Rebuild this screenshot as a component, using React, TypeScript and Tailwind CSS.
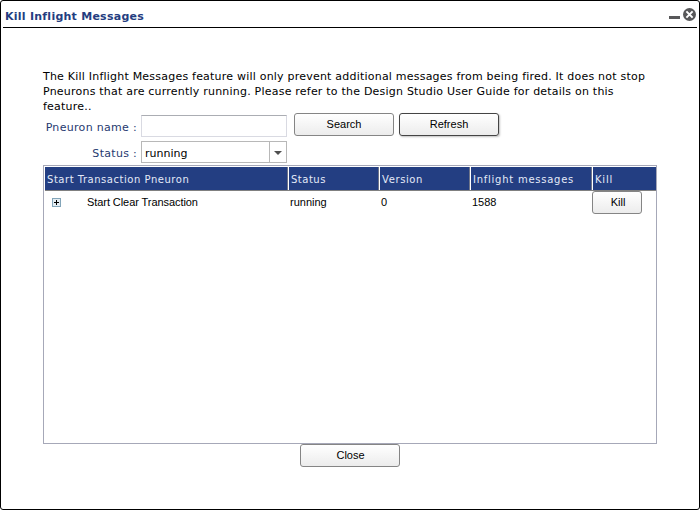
import type { ReactNode } from "react";

const verdana = "font-['DejaVu_Sans',Verdana,sans-serif]";
const arial = "font-['Liberation_Sans',Arial,sans-serif]";

function Button({ children, className = "" }: { children: ReactNode; className?: string }) {
  return (
    <button
      className={`${arial} flex h-[23px] items-center justify-center rounded-[3px] border bg-linear-to-b from-white to-[#ececec] pb-px text-[11px] leading-[13px] text-black ${className}`}
    >
      {children}
    </button>
  );
}

const columns = [
  { label: "Start Transaction Pneuron", style: "w-[243px] pl-[2px]", text: "tracking-[0.53px]" },
  { label: "Status", style: "w-[91px] pl-[2px]", text: "tracking-[0.5px]" },
  { label: "Version", style: "w-[91px] pl-[2px]", text: "tracking-[0.6px]" },
  { label: "Inflight messages", style: "w-[122px] pl-[2px]", text: "tracking-[0.75px]" },
  { label: "Kill", style: "w-[64px] pl-[2px]", text: "tracking-[0.8px]" },
];

export default function App() {
  return (
    <div className={`${verdana} flex h-[510px] w-[700px] flex-col rounded-[3px] border border-black bg-white text-[11px]`}>
      <header className="mx-[2px] flex h-[27px] shrink-0 justify-between border-b border-black pt-[7px] pl-[2px]">
        <h1 className="pt-px text-[11px] leading-[15px] font-bold tracking-[0.25px] whitespace-nowrap text-[#243d80]">Kill Inflight Messages</h1>
        <div className="flex h-[14px] gap-[3px]">
          <span className="mt-[8px] h-[3px] w-[11px] bg-[#58585a]" />
          <svg className="mr-px h-[13px] w-[13px]" viewBox="0 0 13 13">
            <circle cx="6.5" cy="6.5" r="6.5" fill="#58585a" />
            <path d="M3.4 3.4 9.6 9.6M9.6 3.4 3.4 9.6" stroke="white" strokeWidth="2" />
          </svg>
        </div>
      </header>

      <main className="flex flex-col pt-[41px] pl-[42px]">
        <div className="h-[45px] leading-[15px] tracking-[0.215px] whitespace-nowrap text-black">
          <p>The Kill Inflight Messages feature will only prevent additional messages from being fired. It does not stop</p>
          <p>Pneurons that are currently running. Please refer to the Design Studio User Guide for details on this</p>
          <p>feature..</p>
        </div>

        <div className="flex h-[27px] items-start">
          <label className="mt-[6px] w-[94px] text-right leading-[15px] tracking-[0.31px] whitespace-nowrap text-[#1f3a70]">Pneuron name :</label>
          <input className="mt-px ml-[4px] h-[22px] w-[146px] border border-[#d9dae2] border-t-[#abadb3] px-[3px] outline-none" />
          <Button className="mt-[-1px] ml-[7px] w-[100px] border-[#858585]">Search</Button>
          <Button className="mt-[-1px] ml-[5px] w-[100px] border-[#444] shadow-[1px_1px_2px_rgba(0,0,0,0.25)]">Refresh</Button>
        </div>

        <div className="flex h-[24px] items-start">
          <label className="mt-[5px] w-[94px] text-right leading-[15px] tracking-[0.3px] text-[#1f3a70]">Status :</label>
          <div className="ml-[4px] flex h-[22px] w-[146px] border border-[#b8b8b8]">
            <span className="w-[127px] pt-[4px] pl-[3px] leading-[15px] text-black">running</span>
            <span className="flex w-[17px] items-center justify-center border-l border-[#b8b8b8]">
              <svg className="mt-px h-[4px] w-[8px]" viewBox="0 0 8 4">
                <path d="M0 0H8L4 4Z" fill="#505050" />
              </svg>
            </span>
          </div>
        </div>

        <section className="h-[279px] w-[614px] border border-[#a6a8b8] pt-px pl-px">
          <div className="flex h-[24px] w-[611px] border-b border-[#808080] bg-[#233e82]">
            {columns.map((c, i) => (
              <div
                key={c.label}
                className={`${c.style} shrink-0 pt-[5px] text-[10px] leading-[15px] whitespace-nowrap text-[#e4eaf8] ${i > 0 ? "border-l border-white" : ""} ${i < 4 ? "border-r border-r-[#6f7589]" : ""}`}
              >
                <span className={c.text}>{c.label}</span>
              </div>
            ))}
          </div>
          <div className={`${arial} flex h-[23px] w-[611px] leading-[13px] text-black`}>
            <div className="flex w-[245px] pt-[5px] pl-[7px]">
              <svg className="mt-[2px] mr-[26px] h-[9px] w-[9px]" viewBox="0 0 9 9" shapeRendering="crispEdges">
                <rect x="0.5" y="0.5" width="8" height="8" fill="#e4edf3" stroke="#83a5b9" />
                <path d="M2 4.5H7M4.5 2V7" stroke="black" />
              </svg>
              <span className="tracking-[-0.07px]">Start Clear Transaction</span>
            </div>
            <div className="w-[91px] pt-[5px]">running</div>
            <div className="w-[91px] pt-[5px]">0</div>
            <div className="w-[120px] pt-[5px]">1588</div>
            <Button className="w-[50px] border-[#858585] pl-[2px]">Kill</Button>
          </div>
        </section>
        <Button className="ml-[257px] w-[100px] border-[#858585] pl-px">Close</Button>
      </main>
    </div>
  );
}
